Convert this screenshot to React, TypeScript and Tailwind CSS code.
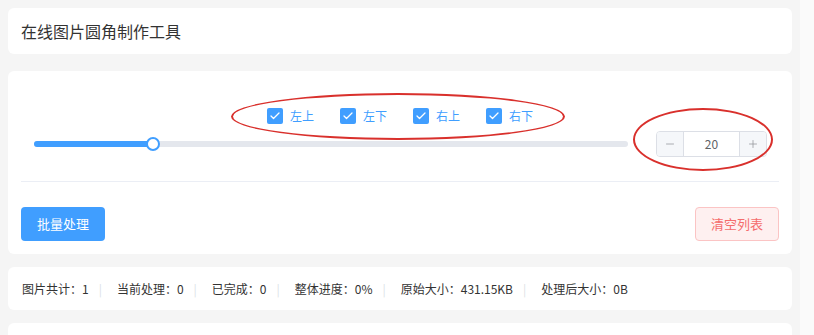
import { Check, Minus, Plus } from 'lucide-react'

const corners = ['左上', '左下', '右上', '右下']

const stats = [
    '图片共计：1',
    '当前处理：0',
    '已完成：0',
    '整体进度：0%',
    '原始大小：431.15KB',
    '处理后大小：0B'
]

function CornerCheckbox({ label }: { label: string }) {
    return (
        <label className="flex items-center">
            <span className="flex h-4 w-4 items-center justify-center rounded-[2px] bg-[#409eff]">
                <Check className="h-3 w-3 text-white" strokeWidth={2.5} />
            </span>
            <span className="ml-[7px] text-[12px] leading-4 text-[#409eff]">{label}</span>
        </label>
    )
}

function RadiusSlider({ value }: { value: number }) {
    return (
        <div className="relative flex h-[26px] flex-1 items-center">
            <div className="h-[6px] w-full rounded-full bg-[#e4e7ed]">
                <div className="h-full rounded-full bg-[#409eff]" style={{ width: `${value}%` }} />
            </div>
            <div
                className="absolute top-1/2 h-[14px] w-[14px] -translate-x-1/2 -translate-y-1/2 rounded-full border-2 border-[#409eff] bg-white"
                style={{ left: `${value}%` }}
            />
        </div>
    )
}

function NumberInput({ value }: { value: number }) {
    return (
        <div className="flex h-[26px] w-[111px] overflow-hidden rounded-[4px] border border-[#dcdfe6] text-[12px] text-[#606266]">
            <button className="flex w-[27px] items-center justify-center border-r border-[#dcdfe6] bg-[#f5f7fa] text-[#909399]">
                <Minus className="h-3 w-3" strokeWidth={1.5} />
            </button>
            <div className="flex flex-1 items-center justify-center bg-white">{value}</div>
            <button className="flex w-[27px] items-center justify-center border-l border-[#dcdfe6] bg-[#f5f7fa] text-[#909399]">
                <Plus className="h-3 w-3" strokeWidth={1.5} />
            </button>
        </div>
    )
}

export default function App() {
    return (
        <div className="flex h-[335px] w-full overflow-hidden bg-[#f5f5f5] font-['Noto_Sans_CJK_SC','Noto_Sans',sans-serif]">
            <div className="flex-1 px-2 pt-2">
                <div className="flex h-[46px] items-center rounded-md bg-white px-[13px]">
                    <h1 className="text-[16px] text-[#333333]">在线图片圆角制作工具</h1>
                </div>

                <div className="relative mt-[17px] rounded-md bg-white px-[13px] pt-[37px] pb-[13px]">
                    <div className="flex h-4 justify-center gap-x-[26px]">
                        {corners.map((c) => (
                            <CornerCheckbox key={c} label={c} />
                        ))}
                    </div>

                    <div className="mt-[7px] flex items-center">
                        <div className="ml-[13px] mr-[28px] flex flex-1">
                            <RadiusSlider value={20} />
                        </div>
                        <div className="mr-[12px]">
                            <NumberInput value={20} />
                        </div>
                    </div>

                    <div className="mt-[24px] h-px bg-[#ebeef5]" />

                    <div className="mt-[25px] flex justify-between">
                        <button className="h-[34px] w-[84px] rounded-[4px] bg-[#409eff] text-[13px] text-white">批量处理</button>
                        <button className="h-[34px] w-[84px] rounded-[4px] border border-[#fbc4c4] bg-[#fef0f0] text-[13px] text-[#f56c6c]">清空列表</button>
                    </div>

                    <div className="pointer-events-none absolute left-[223px] top-[22px] h-[47px] w-[334px] rounded-[50%] border-2 border-[#d9302c]" />
                    <div className="pointer-events-none absolute left-[625px] top-[37px] h-[63px] w-[140px] rounded-[50%] border-2 border-[#d9302c]" />
                </div>

                <div className="mt-[13px] flex h-[43px] items-center rounded-md bg-white px-[14px] text-[12px] text-[#333333]">
                    {stats.map((s, i) => (
                        <span key={s} className="flex items-center">
                            {s}
                            {i < stats.length - 1 && <span className="ml-[10px] mr-[15px] text-[#dcdfe6]">|</span>}
                        </span>
                    ))}
                </div>

                <div className="mt-[13px] h-[40px] rounded-md bg-white" />
            </div>
            <div className="w-[14px] bg-[#fafafa]" />
        </div>
    )
}
